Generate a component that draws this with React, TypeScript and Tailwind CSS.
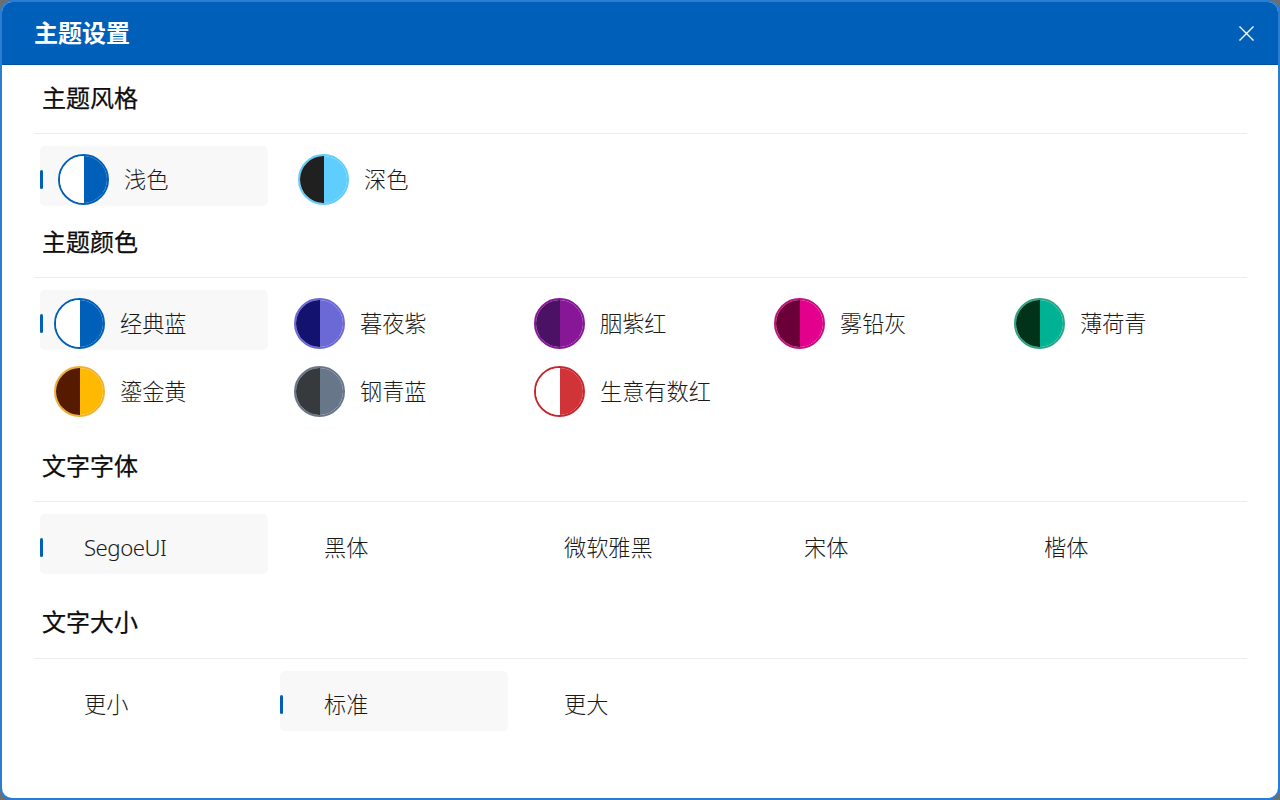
import React from "react";

type Item = { label: string; left?: string; right?: string; ring?: string; active?: boolean; labelClass?: string };

const font = { fontFamily: '"Noto Sans", "Noto Sans CJK SC", sans-serif' };

function Swatch({ left, right, ring }: { left: string; right: string; ring: string }) {
  return (
    <span className="flex h-[51px] w-[51px] shrink-0 overflow-hidden rounded-full border-2" style={{ borderColor: ring }}>
      <span className="h-full w-1/2" style={{ backgroundColor: left }} />
      <span className="h-full w-1/2" style={{ backgroundColor: right }} />
    </span>
  );
}

function Option({ item, swatchClass }: { item: Item; swatchClass: string }) {
  return (
    <div className={`relative flex h-[60px] w-[228px] items-center rounded-[5px] ${swatchClass} ${item.active ? "bg-[#f8f8f8]" : ""}`}>
      {item.active && <span className="absolute left-0 top-[24px] h-[19px] w-[3px] rounded-full bg-[#0060b9]" />}
      {item.left && item.right && item.ring && <Swatch left={item.left} right={item.right} ring={item.ring} />}
      <span className={`pt-[2px] text-[22.2px] font-light leading-none text-[#1a1a1a] ${item.labelClass ?? ""}`}>{item.label}</span>
    </div>
  );
}

function Heading({ title, className }: { title: string; className: string }) {
  return (
    <div className={`ml-[32px] mr-[31px] flex items-center border-b border-[#ececec] pl-[8px] text-[24px] font-normal leading-none text-[#0d0d0d] [-webkit-text-stroke:0.25px_#0d0d0d] ${className}`}>
      {title}
    </div>
  );
}

const styles: Item[] = [
  { label: "浅色", left: "#ffffff", right: "#0060b9", ring: "#0060b9", active: true },
  { label: "深色", left: "#202020", right: "#60cdff", ring: "#60cdff" },
];

const colors: Item[] = [
  { label: "经典蓝", left: "#ffffff", right: "#0060b9", ring: "#0060b9", active: true },
  { label: "暮夜紫", left: "#14126f", right: "#6b69d6", ring: "#6b69d6" },
  { label: "胭紫红", left: "#4a1164", right: "#881798", ring: "#881798" },
  { label: "雾铅灰", left: "#6b0038", right: "#e3008c", ring: "#c3107f" },
  { label: "薄荷青", left: "#00331a", right: "#00b294", ring: "#2aa584" },
  { label: "鎏金黄", left: "#551a00", right: "#ffb900", ring: "#f0b030" },
  { label: "钢青蓝", left: "#363a3d", right: "#68768a", ring: "#68768a" },
  { label: "生意有数红", left: "#ffffff", right: "#d13438", ring: "#c8262b" },
];

const fonts: Item[] = [
  { label: "SegoeUI", active: true, labelClass: "tracking-[-0.5px]" },
  { label: "黑体" },
  { label: "微软雅黑" },
  { label: "宋体" },
  { label: "楷体" },
];

const sizes: Item[] = [{ label: "更小" }, { label: "标准", active: true }, { label: "更大" }];

function Grid({ items, swatchClass }: { items: Item[]; swatchClass: string }) {
  return (
    <div className="ml-[38px] mt-[12px] grid grid-cols-[repeat(5,240px)] gap-y-2">
      {items.map((item) => (
        <Option key={item.label} item={item} swatchClass={swatchClass} />
      ))}
    </div>
  );
}

export default function App() {
  return (
    <div className="h-screen w-screen overflow-hidden bg-[#6e6e6e]" style={font}>
      <div className="flex h-full flex-col overflow-hidden rounded-[12px] border-2 border-[#2b7cd3] bg-white">
        <header className="flex h-[63px] shrink-0 items-center justify-between border-b border-[#00519f] bg-[#0060b9] pl-[32px] pr-[24px] text-white">
          <h1 className="text-[24px] font-bold leading-none">主题设置</h1>
          <svg width="15" height="15" viewBox="0 0 15 15" fill="none" stroke="#ffffff" strokeWidth="1.4">
            <path d="M0.5 0.5 L14.5 14.5 M14.5 0.5 L0.5 14.5" />
          </svg>
        </header>
        <Heading title="主题风格" className="h-[69px] pb-[3px]" />
        <Grid items={styles} swatchClass="gap-[15px] pl-[18px] pt-[7px]" />
        <Heading title="主题颜色" className="mt-[4px] h-[68px] pb-[3px]" />
        <Grid items={colors} swatchClass="gap-[15px] pl-[14px] pt-[7px]" />
        <div className="h-[12px] shrink-0" />
        <Heading title="文字字体" className="h-[72px]" />
        <Grid items={fonts} swatchClass="pl-[44px] pt-[7px]" />
        <div className="h-[12px] shrink-0" />
        <Heading title="文字大小" className="h-[73px] pb-[1px]" />
        <Grid items={sizes} swatchClass="pl-[44px] pt-[7px]" />
      </div>
    </div>
  );
}
